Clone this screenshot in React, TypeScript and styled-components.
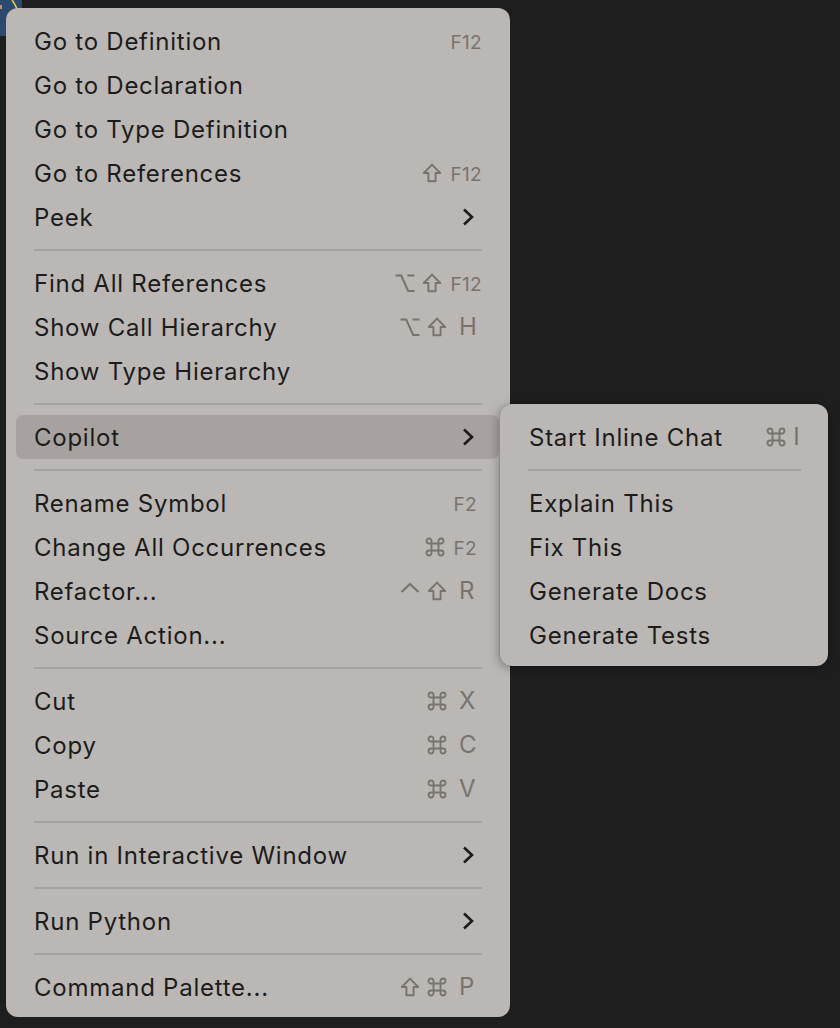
import React from "react";
import styled, { createGlobalStyle } from "styled-components";

const Global = createGlobalStyle`
  html, body {
    margin: 0;
    padding: 0;
    background: #1e1e1e;
  }
  body {
    font-family: "Inter", "Noto Sans", "Liberation Sans", sans-serif;
    -webkit-font-smoothing: antialiased;
  }
`;

const Page = styled.div`
  position: relative;
  width: 840px;
  height: 1028px;
  box-sizing: border-box;
  padding: 8px 0 0 6px;
  overflow: hidden;
`;

const Corner = styled.svg`
  position: absolute;
  left: 0;
  top: 0;
  width: 24px;
  height: 40px;
`;

const Menu = styled.div`
  width: 504px;
  box-sizing: border-box;
  background: #bbb7b4;
  border-radius: 12px;
  padding: 11px 11px 8px 10px;
  display: flex;
  flex-direction: column;
  position: relative;
  z-index: 1;
`;

const SubMenu = styled.div`
  position: absolute;
  left: calc(100% + 1px);
  top: -11px;
  width: 328px;
  box-sizing: border-box;
  background: #bbb7b4;
  border-radius: 12px;
  padding: 11px 10px 9px 10px;
  display: flex;
  flex-direction: column;
  box-shadow: 0 0 0 0.5px rgba(0, 0, 0, 0.15), -2px 2px 10px rgba(0, 0, 0, 0.28);
  z-index: 2;
`;

const RowWrap = styled.div`
  position: relative;
`;

const Row = styled.div<{ $active?: boolean }>`
  height: 44px;
  display: flex;
  align-items: center;
  justify-content: space-between;
  padding: 0 17px 0 18px;
  border-radius: 7px;
  background: ${(p) => (p.$active ? "#a7a29f" : "transparent")};
  color: #1c1c1c;
  font-size: 24px;
  letter-spacing: 0.75px;
`;

const Label = styled.span`
  white-space: nowrap;
`;

const Separator = styled.div`
  height: 22px;
  display: flex;
  align-items: center;
  padding: 0 17px 0 18px;
  &::after {
    content: "";
    flex: 1;
    height: 2px;
    background: #a5a19e;
  }
`;

const Shortcut = styled.span`
  display: flex;
  align-items: flex-end;
  gap: 7px;
  color: #77736f;
  height: 20px;
  letter-spacing: 0.3px;
`;

const Key = styled.span<{ $small?: boolean; $width?: number; $shift?: number }>`
  display: inline-block;
  font-size: ${(p) => (p.$small ? "19px" : "24px")};
  line-height: 1;
  width: ${(p) => (p.$width ? `${p.$width}px` : "auto")};
  margin-left: ${(p) => (p.$small ? 2 : 5)}px;
  margin-right: ${(p) => p.$shift ?? 0}px;
  transform: translateY(${(p) => (p.$small ? 1 : 2)}px);
`;

const ModIcon = styled.svg`
  width: 20px;
  height: 20px;
  display: block;
  flex-shrink: 0;
`;

const Chevron = styled.svg`
  width: 12px;
  height: 20px;
  display: block;
  margin-right: 8px;
`;

type Mod = "shift" | "opt" | "cmd" | "ctrl";

const ModGlyph: React.FC<{ m: Mod }> = ({ m }) => {
  const stroke = "#77736f";
  if (m === "shift")
    return (
      <ModIcon viewBox="0 0 20 20">
        <path
          d="M10 1.6 L18.2 10 H13.6 V18.2 H6.4 V10 H1.8 Z"
          fill="none"
          stroke={stroke}
          strokeWidth="1.9"
          strokeLinejoin="round"
        />
      </ModIcon>
    );
  if (m === "opt")
    return (
      <ModIcon viewBox="0 0 20 20">
        <path
          d="M0.5 2.5 H6.2 L13.2 18 H19.5 M12.5 2.5 H19.5"
          fill="none"
          stroke={stroke}
          strokeWidth="2"
        />
      </ModIcon>
    );
  if (m === "ctrl")
    return (
      <ModIcon viewBox="0 0 20 20">
        <path
          d="M1.5 11 L10 3 L18.5 11"
          fill="none"
          stroke={stroke}
          strokeWidth="2.2"
        />
      </ModIcon>
    );
  return (
    <ModIcon viewBox="0 0 20 20">
      <path
        d="M6.5 6.5 H13.5 V13.5 H6.5 Z M6.5 6.5 V4 A2.5 2.5 0 1 0 4 6.5 H6.5 M13.5 6.5 V4 A2.5 2.5 0 1 1 16 6.5 H13.5 M6.5 13.5 V16 A2.5 2.5 0 1 1 4 13.5 H6.5 M13.5 13.5 V16 A2.5 2.5 0 1 0 16 13.5 H13.5"
        fill="none"
        stroke={stroke}
        strokeWidth="1.8"
      />
    </ModIcon>
  );
};

const Arrow = () => (
  <Chevron viewBox="0 0 12 20">
    <path d="M2 2.5 L10 10 L2 17.5" fill="none" stroke="#1c1c1c" strokeWidth="2.6" />
  </Chevron>
);

type Item =
  | { sep: true }
  | {
      label: string;
      mods?: Mod[];
      keyText?: string;
      fkey?: boolean;
      keyShift?: number;
      sub?: boolean;
      active?: boolean;
    };

const mainItems: Item[] = [
  { label: "Go to Definition", keyText: "F12", fkey: true },
  { label: "Go to Declaration" },
  { label: "Go to Type Definition" },
  { label: "Go to References", mods: ["shift"], keyText: "F12", fkey: true },
  { label: "Peek", sub: true },
  { sep: true },
  { label: "Find All References", mods: ["opt", "shift"], keyText: "F12", fkey: true },
  { label: "Show Call Hierarchy", mods: ["opt", "shift"], keyText: "H" },
  { label: "Show Type Hierarchy" },
  { sep: true },
  { label: "Copilot", sub: true, active: true },
  { sep: true },
  { label: "Rename Symbol", keyText: "F2", fkey: true, keyShift: 5 },
  { label: "Change All Occurrences", mods: ["cmd"], keyText: "F2", fkey: true, keyShift: 5 },
  { label: "Refactor...", mods: ["ctrl", "shift"], keyText: "R" },
  { label: "Source Action..." },
  { sep: true },
  { label: "Cut", mods: ["cmd"], keyText: "X" },
  { label: "Copy", mods: ["cmd"], keyText: "C" },
  { label: "Paste", mods: ["cmd"], keyText: "V" },
  { sep: true },
  { label: "Run in Interactive Window", sub: true },
  { sep: true },
  { label: "Run Python", sub: true },
  { sep: true },
  { label: "Command Palette...", mods: ["shift", "cmd"], keyText: "P" },
];

const subItems: Item[] = [
  { label: "Start Inline Chat", mods: ["cmd"], keyText: "I" },
  { sep: true },
  { label: "Explain This" },
  { label: "Fix This" },
  { label: "Generate Docs" },
  { label: "Generate Tests" },
];

const SubRow = styled(Row)`
  padding: 0 18px 0 19px;
`;

const SubKey = styled(Key)`
  margin-left: 0;
`;

const renderShortcut = (it: Exclude<Item, { sep: true }>) => {
  if (it.sub) return <Arrow />;
  if (!it.keyText) return null;
  return (
    <Shortcut>
      {(it.mods || []).map((m, i) => (
        <ModGlyph key={i} m={m} />
      ))}
      <Key $small={it.fkey} $width={it.fkey ? undefined : 19} $shift={it.fkey ? it.keyShift : 4}>
        {it.keyText}
      </Key>
    </Shortcut>
  );
};

export default function App() {
  return (
    <>
      <Global />
      <Page>
        <Corner viewBox="0 0 24 40">
          <rect x="0" y="0" width="22" height="36" fill="#2c4a6f" />
          <rect x="0" y="5" width="2" height="4" fill="#c98b6a" />
          <path d="M12 0 Q15 4 17 9" fill="none" stroke="#e6c84a" strokeWidth="1.6" />
        </Corner>
        <Menu>
          {mainItems.map((it, i) => {
            if ("sep" in it) return <Separator key={i} />;
            if (it.active)
              return (
                <RowWrap key={i}>
                  <Row $active>
                    <Label>{it.label}</Label>
                    {renderShortcut(it)}
                  </Row>
                  <SubMenu>
                    {subItems.map((s, j) => {
                      if ("sep" in s) return <Separator key={j} />;
                      return (
                        <SubRow key={j}>
                          <Label>{s.label}</Label>
                          {s.keyText && (
                            <Shortcut>
                              {(s.mods || []).map((m, k) => (
                                <ModGlyph key={k} m={m} />
                              ))}
                              <SubKey>{s.keyText}</SubKey>
                            </Shortcut>
                          )}
                        </SubRow>
                      );
                    })}
                  </SubMenu>
                </RowWrap>
              );
            return (
              <Row key={i}>
                <Label>{it.label}</Label>
                {renderShortcut(it)}
              </Row>
            );
          })}
        </Menu>
      </Page>
    </>
  );
}
